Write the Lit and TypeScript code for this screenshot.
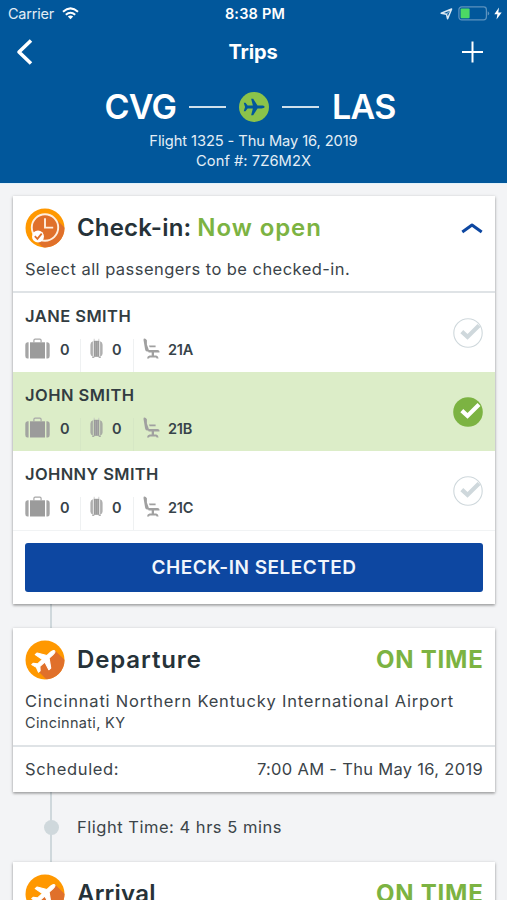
import { LitElement, html, svg, css, nothing } from "lit";
import { customElement, property } from "lit/decorators.js";
import { classMap } from "lit/directives/class-map.js";

interface Passenger {
  name: string;
  seat: string;
  selected: boolean;
  tracking: string;
}

interface Stop {
  title: string;
  tracking: string;
  airport?: string;
  city?: string;
  when?: string;
}

const passengers: Passenger[] = [
  { name: "JANE SMITH", seat: "21A", selected: false, tracking: "wide" },
  { name: "JOHN SMITH", seat: "21B", selected: true, tracking: "wide" },
  { name: "JOHNNY SMITH", seat: "21C", selected: false, tracking: "snug" },
];

// Plane pointing right, centred on the origin, about 24 units long.
const plane = svg`<path d="M12.500 0C12.500-1 10.500-1.600 8.800-1.600H4.200L-.8-9.400H-3.200L-1.200-1.600H-7.300L-9.800-4.700H-11.800L-10.300 0L-11.800 4.700H-9.800L-7.300 1.600H-1.200L-3.200 9.400H-.8L4.200 1.600H8.800C10.500 1.600 12.500 1 12.500 0Z"/>`;

const flightBadge = html`
  <svg class="badge" width="40" height="40" viewBox="0 0 40 40">
    <defs><clipPath id="disc"><circle cx="20" cy="20" r="19.5" /></clipPath></defs>
    <circle cx="20" cy="20" r="19.5" fill="#ff9800" />
    <path d="M30 10.500L44 24V44H26L12.500 30.500L20 20Z" fill="#e0702b" clip-path="url(#disc)" />
    <g transform="translate(19.6 19.900) rotate(-42) scale(1.080)" fill="#fff" stroke="#fff" stroke-width="1" stroke-linejoin="round">${plane}</g>
  </svg>`;

const clockBadge = html`
  <svg class="badge" width="40" height="40" viewBox="0 0 40 40">
    <defs><clipPath id="disc"><circle cx="20" cy="20" r="19.5" /></clipPath></defs>
    <circle cx="20" cy="20" r="19.5" fill="#ff9800" />
    <path d="M29 9L44 24V44H23L8 30Z" fill="#e0702b" clip-path="url(#disc)" />
    <circle cx="20" cy="19.5" r="13.2" fill="#e0702b" stroke="#ffeedd" stroke-width="1.9" />
    <path d="M20 10.2V19.6H28.2" fill="none" stroke="#ffeedd" stroke-width="1.9" />
    <circle cx="13" cy="28.4" r="6" fill="#fff" />
    <path d="M9.800 28.200L12.400 30.800L16.700 25.600" fill="none" stroke="#e0702b" stroke-width="1.800" />
  </svg>`;

const suitcase = html`
  <svg width="25" height="21" viewBox="0 0 25 21" fill="#9b9b9b">
    <path d="M3.600 4.300V20.500H2.600Q.3 20.500 .3 18V6.800Q.3 4.300 2.600 4.300ZM21.400 4.300V20.500H22.400Q24.700 20.500 24.700 18V6.800Q24.700 4.300 22.400 4.300Z" opacity=".9" />
    <path d="M5 4.300H20V20.500H5Z" />
    <path d="M8.900 4.500V2.400Q8.900 1.200 10.100 1.200H14.900Q16.100 1.200 16.100 2.400V4.500" fill="none" stroke="#a8a8a8" stroke-width="1.200" />
  </svg>`;

const carryOn = html`
  <svg width="13" height="21" viewBox="0 0 13 21" fill="#9b9b9b">
    <path d="M4.200 3.500V.8M8.800 3.500V.8" stroke="#c0c0c0" stroke-width=".7" />
    <rect x="3.700" y="2.800" width="5.600" height="16" />
    <path d="M2.900 3.200Q.4 4 .4 6.800V15.500Q.4 17.800 2.900 18.600ZM10.100 3.200Q12.600 4 12.600 6.800V15.500Q12.600 17.800 10.100 18.600Z" opacity=".8" />
    <path d="M5.500 3.500V18.500M7.500 3.500V18.500" stroke="#b4b4b4" stroke-width=".5" />
    <path d="M2.200 18.500H4.300V19.900H2.200ZM8.700 18.500H10.800V19.900H8.700Z" opacity=".8" />
  </svg>`;

const seatIcon = html`
  <svg width="17" height="21" viewBox="0 0 17 21" fill="#a0a0a0">
    <path d="M.5 2Q.4 .6 1.600 .6Q2.800 .8 3.900 2.200V6.600L6.400 13.600H4Q2.500 13.400 2.100 11.600Z" />
    <path d="M6 7.400H12.600V9.300H6.600ZM4.800 11.900H14.500Q16.800 12 16.500 14.600H5.600ZM8.700 14H11V18H8.700Z" />
    <path d="M4 20.400Q4.200 17.900 6.500 17.500H13.200Q15.400 17.900 15.600 20.400H13.600L13 19.500H6.700L6 20.400Z" />
  </svg>`;

const base = css`
  * { box-sizing: border-box; }
  svg { display: block; flex: none; }
`;

@customElement("passenger-row")
export class PassengerRow extends LitElement {
  static styles = [base, css`
    :host { display: block; }
    .row { display: flex; align-items: center; justify-content: space-between; height: 79px; padding: 0 12px; }
    .row.selected { background: #dcedc8; }
    .info { height: 79px; padding-top: 12px; }
    .name { font-size: 16.5px; font-weight: 600; line-height: 22px; white-space: nowrap; color: #323c41; }
    .wide { letter-spacing: .46px; }
    .snug { letter-spacing: .38px; }
    .facts { display: flex; margin-top: 12px; height: 33px; }
    .fact { display: flex; align-items: flex-start; font-size: 14.5px; font-weight: 600; line-height: 22px; color: #37434a; }
    .fact + .fact { border-left: 1px solid rgba(120, 140, 150, .12); }
    .selected .fact + .fact { border-left-color: rgba(120, 140, 150, .05); }
    .bags { width: 55px; gap: 10px; }
    .carry { width: 53px; padding-left: 9px; gap: 9px; }
    .seat { padding-left: 9px; gap: 8px; letter-spacing: -.2px; }
    .fact svg { margin-top: -1px; }
  `];

  @property({ attribute: false }) passenger!: Passenger;

  render() {
    const p = this.passenger;
    return html`
      <div class=${classMap({ row: true, selected: p.selected })}>
        <div class="info">
          <div class="name ${p.tracking}">${p.name}</div>
          <div class="facts">
            <div class="fact bags">${suitcase}<span>0</span></div>
            <div class="fact carry">${carryOn}<span>0</span></div>
            <div class="fact seat">${seatIcon}<span>${p.seat}</span></div>
          </div>
        </div>
        <svg width="30" height="30" viewBox="0 0 30 30">
          <circle cx="15" cy="15" r=${p.selected ? 14.8 : 14.2} fill=${p.selected ? "#7cb342" : "#fff"}
            stroke=${p.selected ? "none" : "#cfd8dc"} stroke-width="1.100" />
          <path d="M8.800 13.600L14.500 18.900L26 7.400" fill="none" stroke=${p.selected ? "#fff" : "#cfd8dc"} stroke-width="4.200" />
        </svg>
      </div>`;
  }
}

@customElement("app-root")
export class AppRoot extends LitElement {
  static styles = [base, css`
    :host {
      display: flex; flex-direction: column; height: 900px; overflow: hidden;
      background: #f3f4f6; color: #3b4449;
      font-family: Inter, "Open Sans", sans-serif; font-size: 16.5px; white-space: nowrap;
    }
    .top { flex: none; height: 183px; background: #01579b; color: #fff; }
    .status { display: grid; grid-template-columns: 1fr auto 1fr; align-items: center; height: 27px; padding: 0 5px 0 8px; font-size: 14.5px; }
    .carrier { display: flex; align-items: center; gap: 8px; letter-spacing: -.22px; color: #e3edf5; }
    .time { font-size: 14.5px; font-weight: 600; letter-spacing: .2px; }
    .power { display: flex; align-items: center; justify-content: flex-end; gap: 5px; }
    .bolt { margin-left: -1px; }
    .nav { display: grid; grid-template-columns: 1fr auto 1fr; align-items: center; height: 50px; padding: 0 23px 0 16px; }
    .title { font-size: 20px; font-weight: 700; letter-spacing: -.1px; margin-left: 6px; }
    .add { justify-self: end; }
    .route { display: flex; align-items: center; justify-content: center; height: 55px; padding-top: 5px; margin-right: 7px; }
    .code { font-size: 34px; font-weight: 600; line-height: 40px; letter-spacing: -.75px; }
    .dash { width: 37px; height: 1.5px; background: #cfe0ec; margin: 0 13px; }
    .detail { font-size: 14.7px; line-height: 20px; text-align: center; color: #e4eef6; margin-top: -1px; letter-spacing: -.1px; }
    .detail + .detail { margin-top: 0; letter-spacing: .04px; }
    .feed {
      flex: none; display: flex; flex-direction: column; padding: 12px 12px 0 13px; border-top: 1px solid #e1f1fa;
      background: linear-gradient(#cfd8dc, #cfd8dc) 50px 300px / 2px 100% no-repeat;
    }
    .card { background: #fff; box-shadow: 0 1px 3px rgba(0, 0, 0, .34), 0 2px 2px rgba(0, 0, 0, .1); }
    .head { display: flex; align-items: center; height: 63px; padding: 0 12px; }
    .badge { margin-right: 12px; }
    .heading { font-size: 24px; font-weight: 600; line-height: 30px; color: #263238; letter-spacing: .88px; }
    .heading.checkin { letter-spacing: .18px; }
    .heading.arrival { letter-spacing: .2px; }
    .heading.open { color: #7cb342; margin-left: 6px; letter-spacing: .92px; }
    .status-flag { margin-left: auto; margin-right: -.5px; font-size: 24px; font-weight: 700; color: #7cb342; letter-spacing: .75px; }
    .chevron { margin-left: auto; }
    .prompt { height: 34px; padding: 0 12px; line-height: 20px; letter-spacing: .45px; border-bottom: 2px solid #dfe3e6; }
    .action { height: 74px; padding: 12px 12px 0; border-top: 1px solid #f1f3f4; }
    .button {
      display: block; width: 458px; height: 49px; padding: 0; border: 0; border-radius: 3px; background: #0d47a1; color: #f1f6fc;
      font: 600 19px/49px Inter, sans-serif; letter-spacing: .5px;
    }
    .gap { height: 24px; }
    .airport { padding: 0 12px; line-height: 21px; letter-spacing: .8px; }
    .city { height: 33px; padding: 0 12px; font-size: 14.5px; line-height: 22px; letter-spacing: .32px; }
    .schedule { display: flex; justify-content: space-between; align-items: center; height: 47px; padding: 0 12px 1px; border-top: 2px solid #dfe3e6; }
    .label { letter-spacing: .65px; }
    .when { letter-spacing: .31px; }
    .leg { display: flex; align-items: center; height: 70px; padding-left: 31px; gap: 18px; letter-spacing: .52px; }
    .dot { width: 15px; height: 15px; border-radius: 50%; background: #cfd8dc; }
  `];

  private stop(s: Stop) {
    return html`
      <section class="card">
        <div class="head">
          ${flightBadge}<div class="heading ${s.tracking}">${s.title}</div>
          <div class="status-flag">ON TIME</div>
        </div>
        ${s.airport
          ? html`<div class="airport">${s.airport}</div>
              <div class="city">${s.city}</div>
              <div class="schedule"><span class="label">Scheduled:</span><span class="when">${s.when}</span></div>`
          : nothing}
      </section>`;
  }

  render() {
    return html`
      <header class="top">
        <div class="status">
          <div class="carrier">
            <span>Carrier</span>
            <svg width="17" height="13" viewBox="0 0 17 13" fill="none" stroke="#fff" stroke-width="2">
              <path d="M1 4.700Q8.500-1.900 16 4.700M3.800 7.700Q8.500 3.700 13.200 7.700" />
              <path d="M8.500 12.300L5.800 9.600Q8.500 7.500 11.200 9.600Z" fill="#fff" stroke="none" />
            </svg>
          </div>
          <div class="time">8:38 PM</div>
          <div class="power">
            <svg width="13" height="12" viewBox="0 0 13 12" fill="none" stroke="#dbe8f2" stroke-width="1.500" stroke-linejoin="round">
              <path d="M11.600 1L7.600 10.800L6.500 6.200L1.200 5.300Z" /><path d="M11 1.500L6.500 6.200" stroke-width=".8" />
            </svg>
            <svg width="32" height="15" viewBox="0 0 32 15">
              <rect x=".9" y=".9" width="27.500" height="13" rx="2.800" fill="none" stroke="#5d93bf" stroke-width="1.200" />
              <rect x="2.600" y="2.600" width="9" height="9.600" rx="1" fill="#4cd964" />
              <path d="M29.700 5.200Q31.200 6 31.200 7.400T29.700 9.600Z" fill="#5d93bf" />
            </svg>
            <svg class="bolt" width="8" height="13" viewBox="0 0 8 13" fill="#fff"><path d="M5 .5L.3 7.200H3.400L2.500 12.500L7.700 5.400H4.300Z" /></svg>
          </div>
        </div>
        <div class="nav">
          <svg width="18" height="28" viewBox="0 0 18 28" fill="none" stroke="#fff" stroke-width="3.600">
            <path d="M15 2.500L3 14L15 25.500" stroke-linejoin="round" />
          </svg>
          <div class="title">Trips</div>
          <svg class="add" width="24" height="24" viewBox="0 0 24 24" stroke="#fff" stroke-width="2"><path d="M12.500 1.500V22.500M2 12H23" /></svg>
        </div>
        <div class="route">
          <span class="code">CVG</span><span class="dash"></span>
          <svg width="30" height="30" viewBox="0 0 30 30">
            <circle cx="15" cy="15" r="15" fill="#8bc34a" />
            <g transform="translate(14.900 15) scale(.86 .88)" fill="#01579b">${plane}</g>
          </svg>
          <span class="dash"></span><span class="code">LAS</span>
        </div>
        <div class="detail">Flight 1325 - Thu May 16, 2019</div>
        <div class="detail">Conf #: 7Z6M2X</div>
      </header>
      <main class="feed">
        <section class="card">
          <div class="head">
            ${clockBadge}<div class="heading checkin">Check-in:</div><div class="heading open">Now open</div>
            <svg class="chevron" width="22" height="12" viewBox="0 0 22 12" fill="none" stroke="#0d47a1" stroke-width="3">
              <path d="M1.300 10L11 3L20.700 10" stroke-linejoin="round" />
            </svg>
          </div>
          <div class="prompt">Select all passengers to be checked-in.</div>
          ${passengers.map((p) => html`<passenger-row .passenger=${p}></passenger-row>`)}
          <div class="action"><button class="button">CHECK-IN SELECTED</button></div>
        </section>
        <div class="gap"></div>
        ${this.stop({
          title: "Departure",
          tracking: "",
          airport: "Cincinnati Northern Kentucky International Airport",
          city: "Cincinnati, KY",
          when: "7:00 AM - Thu May 16, 2019",
        })}
        <div class="leg"><span class="dot"></span><span>Flight Time: 4 hrs 5 mins</span></div>
        ${this.stop({ title: "Arrival", tracking: "arrival" })}
      </main>`;
  }
}
